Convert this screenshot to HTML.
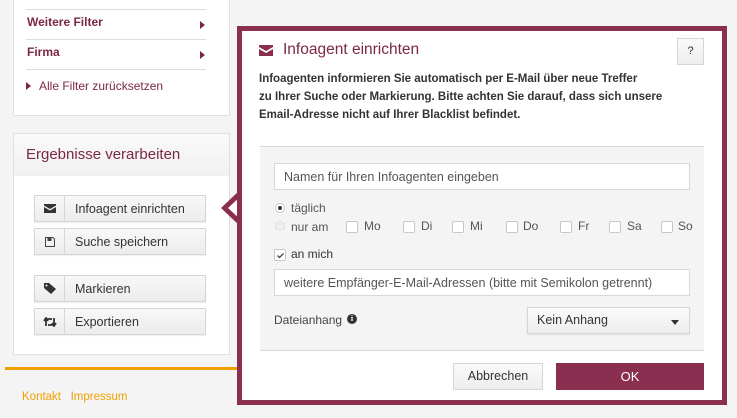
<!DOCTYPE html>
<html><head><meta charset="utf-8"><style>
*{box-sizing:border-box;margin:0;padding:0}
body{width:737px;height:418px;background:#f4f4f4;font-family:"Liberation Sans",sans-serif;position:relative;overflow:hidden;color:#333}
.a{position:absolute}
.line{position:absolute;height:1px;background:#ddd}
.mar{color:#7b2746}
.btn{position:absolute;left:34px;width:172px;height:27px;border:1px solid #d6d6d6;background:linear-gradient(#f8f8f8,#ececec);font-size:12.5px;color:#333;box-shadow:0 1px 1px rgba(0,0,0,.08)}
.btn .ic{position:absolute;left:0;top:0;width:30px;height:100%;border-right:1px solid #d6d6d6;display:flex;align-items:center;justify-content:center}
.btn .t{position:absolute;left:40px;top:6px}
.inp{position:absolute;left:274px;width:416px;height:27px;background:#fff;border:1px solid #d8d8d8;font-size:12.5px;color:#555;padding:6px 9px}
.cb{position:absolute;width:12px;height:12px;border:1px solid #c8c8c8;background:#fff;border-radius:2px;top:221px}
.cl{position:absolute;top:219px;font-size:12px;color:#555}
</style></head><body>
<div class="a" style="left:13px;top:0;width:217px;height:116px;background:#fff;border:1px solid #e0e0e0;border-top:none"></div>
<div class="line" style="left:26px;top:9px;width:180px"></div>
<div class="line" style="left:26px;top:39px;width:180px"></div>
<div class="line" style="left:26px;top:69px;width:180px"></div>
<div class="a mar" style="left:27px;top:15px;font-size:12px;font-weight:bold">Weitere Filter</div>
<div class="a mar" style="left:27px;top:45px;font-size:12px;font-weight:bold">Firma</div>
<div class="a" style="left:200px;top:21px;border-left:5px solid #7b2746;border-top:4px solid transparent;border-bottom:4px solid transparent"></div>
<div class="a" style="left:200px;top:51px;border-left:5px solid #7b2746;border-top:4px solid transparent;border-bottom:4px solid transparent"></div>
<div class="a" style="left:26px;top:82px;border-left:5px solid #7b2746;border-top:4px solid transparent;border-bottom:4px solid transparent"></div>
<div class="a mar" style="left:39px;top:79px;font-size:12px">Alle Filter zurücksetzen</div>
<div class="a" style="left:13px;top:133px;width:217px;height:222px;background:#fff;border:1px solid #e0e0e0"></div>
<div class="a" style="left:14px;top:134px;width:215px;height:42px;background:linear-gradient(#fafafa,#f0f0f0)"></div>
<div class="a mar" style="left:26px;top:146px;font-size:15px">Ergebnisse verarbeiten</div>
<div class="btn" style="top:195px"><div class="ic"><svg width="12" height="9" viewBox="0 0 12 9"><path d="M0 0h12v1.5L6 5 0 1.5z M0 3l6 3.5L12 3v6H0z" fill="#333"/></svg></div><span class="t">Infoagent einrichten</span></div>
<div class="btn" style="top:228px"><div class="ic"><svg width="10" height="10" viewBox="0 0 10 10"><path d="M0.5 0.5h7.5l1.5 1.5v7.5h-9z" fill="none" stroke="#444"/><rect x="2.5" y="1" width="4" height="3" fill="#444"/></svg></div><span class="t">Suche speichern</span></div>
<div class="btn" style="top:275px"><div class="ic"><svg width="12" height="11" viewBox="0 0 12 11"><path d="M0 0h5l7 6-5 5-7-6z" fill="#333"/><circle cx="2.5" cy="2.5" r="1" fill="#fff"/></svg></div><span class="t">Markieren</span></div>
<div class="btn" style="top:308px"><div class="ic"><svg width="14" height="10" viewBox="0 0 14 10"><path d="M3 9V2h6M1 4l2-3 2 3M11 1v7H5M9 6l2 3 2-3" fill="none" stroke="#333" stroke-width="1.8"/></svg></div><span class="t">Exportieren</span></div>
<div class="a" style="left:5px;top:367px;width:235px;height:3px;background:#f0a000"></div>
<div class="a" style="left:22px;top:391px;font-size:11.5px;color:#f0a000">Kontakt&nbsp;&nbsp; Impressum</div>
<div class="a" style="left:221px;top:190px;border-right:19px solid #8a2f4f;border-top:18px solid transparent;border-bottom:18px solid transparent"></div>
<div class="a" style="left:228px;top:196px;border-right:13px solid #fff;border-top:12px solid transparent;border-bottom:12px solid transparent"></div>
<div class="a" style="left:237px;top:26px;width:490px;height:379px;border:5px solid #8a2f4f;background:#fff"></div>
<svg class="a" style="left:259px;top:45px" width="14" height="11" viewBox="0 0 14 11"><path d="M0 0h14v2L7 6 0 2z M0 4l7 4 7-4v7H0z" fill="#8a2f4f"/></svg>
<div class="a mar" style="left:283px;top:41px;font-size:15.5px">Infoagent einrichten</div>
<div class="a" style="left:677px;top:38px;width:27px;height:27px;border:1px solid #d6d6d6;background:linear-gradient(#fafafa,#eee);font-size:11px;text-align:center;line-height:25px">?</div>
<div class="a" style="left:259px;top:70px;font-size:11.5px;font-weight:bold;line-height:18px;color:#333">Infoagenten informieren Sie automatisch per E-Mail über neue Treffer<br>zu Ihrer Suche oder Markierung. Bitte achten Sie darauf, dass sich unsere<br>Email-Adresse nicht auf Ihrer Blacklist befindet.</div>
<div class="a" style="left:260px;top:146px;width:444px;height:205px;background:#f5f4f4;border-top:1px solid #d8d8d8;border-bottom:1px solid #d8d8d8"></div>
<div class="inp" style="top:163px">Namen für Ihren Infoagenten eingeben</div>
<div class="a" style="left:275px;top:203px;width:10px;height:10px;border-radius:50%;border:1px solid #ccc;background:#fff"></div>
<div class="a" style="left:278px;top:206px;width:4px;height:4px;border-radius:50%;background:#333"></div>
<div class="a" style="left:291px;top:201px;font-size:12px;color:#555">täglich</div>
<div class="a" style="left:275px;top:221px;width:10px;height:10px;border-radius:50%;border:1px solid #ddd;background:#eee"></div>
<div class="a" style="left:291px;top:220px;font-size:12px;color:#555">nur am</div>
<div class="cb" style="left:346px"></div><div class="cl" style="left:364px">Mo</div>
<div class="cb" style="left:403px"></div><div class="cl" style="left:421px">Di</div>
<div class="cb" style="left:452px"></div><div class="cl" style="left:470px">Mi</div>
<div class="cb" style="left:506px"></div><div class="cl" style="left:523px">Do</div>
<div class="cb" style="left:560px"></div><div class="cl" style="left:578px">Fr</div>
<div class="cb" style="left:609px"></div><div class="cl" style="left:627px">Sa</div>
<div class="cb" style="left:661px"></div><div class="cl" style="left:678px">So</div>
<div class="cb" style="left:274px;top:249px"><svg class="a" style="left:1px;top:1px" width="9" height="9" viewBox="0 0 9 9"><path d="M1.5 4.5l2 2 4-4" fill="none" stroke="#444" stroke-width="1.3"/></svg></div>
<div class="a" style="left:291px;top:247px;font-size:12px;color:#333">an mich</div>
<div class="inp" style="top:269px">weitere Empfänger-E-Mail-Adressen (bitte mit Semikolon getrennt)</div>
<div class="a" style="left:274px;top:313px;font-size:12px;color:#444">Dateianhang</div>
<div class="a" style="left:347px;top:314px;width:10px;height:10px;border-radius:50%;background:#333;color:#fff;font-size:8px;font-weight:bold;text-align:center;line-height:10px;font-family:'Liberation Serif',serif">i</div>
<div class="a" style="left:527px;top:307px;width:163px;height:27px;border:1px solid #d6d6d6;background:linear-gradient(#fafafa,#eee);font-size:12.5px;color:#333;padding:5px 9px;box-shadow:0 1px 1px rgba(0,0,0,.08)">Kein Anhang</div>
<div class="a" style="left:671px;top:320px;border-top:5px solid #333;border-left:4.5px solid transparent;border-right:4.5px solid transparent"></div>
<div class="a" style="left:453px;top:363px;width:90px;height:27px;border:1px solid #d6d6d6;background:linear-gradient(#fafafa,#eee);font-size:12.5px;text-align:center;line-height:25px;color:#333">Abbrechen</div>
<div class="a" style="left:556px;top:363px;width:148px;height:27px;background:#8a2f4f;color:#fff;font-size:13px;text-align:center;line-height:27px">OK</div>
</body></html>
